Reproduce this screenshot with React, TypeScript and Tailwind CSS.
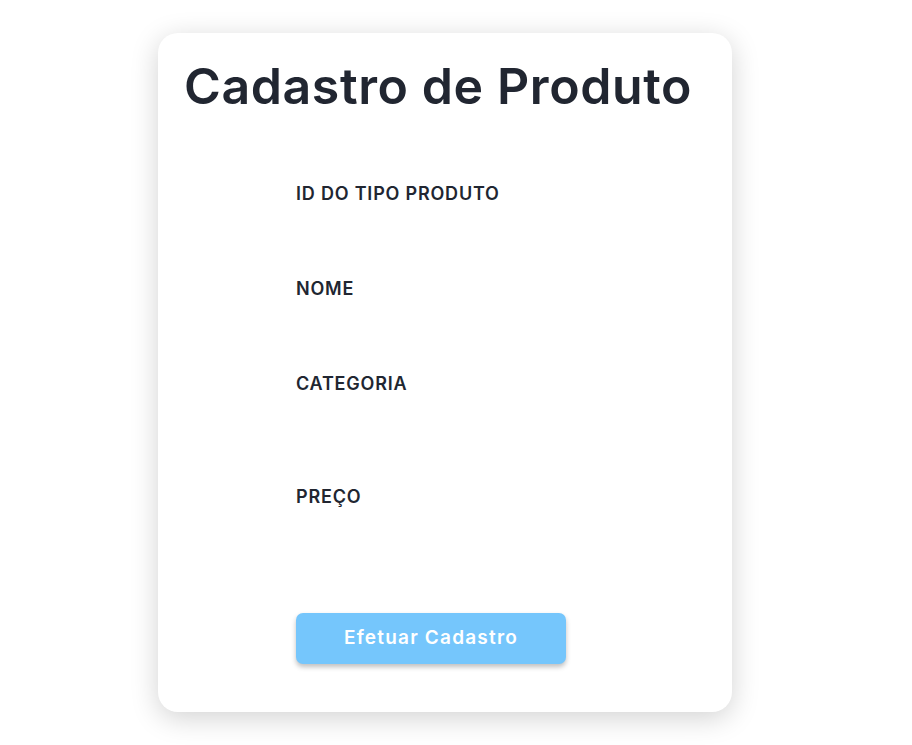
import React from 'react';

const fields = [
    { label: 'ID DO TIPO PRODUTO', gap: 'h-[67px]' },
    { label: 'NOME', gap: 'h-[67px]' },
    { label: 'CATEGORIA', gap: 'h-[85px]' },
    { label: 'PREÇO', gap: 'h-[102px]' },
];

export default function App() {
    return (
        <div className="min-h-[745px] bg-white pt-[33px] pl-[158px] font-['Inter',sans-serif] text-[#212631]">
            <div className="w-[574px] h-[679px] rounded-[20px] bg-white shadow-[0_6px_28px_rgba(0,0,0,0.18)] pt-[28px]">
                <h1 className="pl-[26px] text-[50px] leading-[50px] font-semibold tracking-[0.6px]">
                    Cadastro de Produto
                </h1>
                <form className="mt-[69px] pl-[138px]" onSubmit={(e) => e.preventDefault()}>
                    {fields.map((f) => (
                        <div key={f.label}>
                            <label className="block h-7 leading-7 text-[18px] font-semibold tracking-[0.8px]">{f.label}</label>
                            <div className={f.gap} />
                        </div>
                    ))}
                    <button
                        type="submit"
                        className="w-[270px] h-[51px] rounded-[7px] bg-[#75c6fc] text-white text-[19px] font-semibold tracking-[1.2px] shadow-[0_3px_5px_rgba(0,0,0,0.25)]"
                    >
                        Efetuar Cadastro
                    </button>
                </form>
            </div>
        </div>
    );
}
